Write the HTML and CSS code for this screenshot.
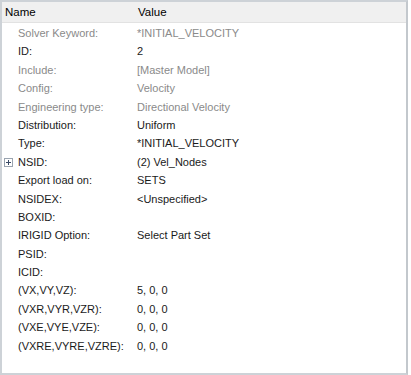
FILE: index.html
```html
<!DOCTYPE html>
<html lang="en">
<head>
    <meta charset="UTF-8">
    <title>Entity Editor</title>
    <link rel="stylesheet" href="styles.css">
</head>
<body>
    <div class="panel">
        <div class="header">
            <div class="col-name">Name</div>
            <div class="col-value">Value</div>
        </div>

        <div class="rows">
            <div class="row muted"><div class="label">Solver Keyword:</div><div class="value">*INITIAL_VELOCITY</div></div>
            <div class="row"><div class="label">ID:</div><div class="value">2</div></div>
            <div class="row muted"><div class="label">Include:</div><div class="value">[Master Model]</div></div>
            <div class="row muted"><div class="label">Config:</div><div class="value">Velocity</div></div>
            <div class="row muted"><div class="label">Engineering type:</div><div class="value">Directional Velocity</div></div>
            <div class="row"><div class="label">Distribution:</div><div class="value">Uniform</div></div>
            <div class="row"><div class="label">Type:</div><div class="value">*INITIAL_VELOCITY</div></div>
            <div class="row">
                <span class="expander"></span>
                <div class="label">NSID:</div><div class="value">(2) Vel_Nodes</div>
            </div>
            <div class="row"><div class="label">Export load on:</div><div class="value">SETS</div></div>
            <div class="row"><div class="label">NSIDEX:</div><div class="value">&lt;Unspecified&gt;</div></div>
            <div class="row"><div class="label">BOXID:</div><div class="value"></div></div>
            <div class="row"><div class="label">IRIGID Option:</div><div class="value">Select Part Set</div></div>
            <div class="row"><div class="label">PSID:</div><div class="value"></div></div>
            <div class="row"><div class="label">ICID:</div><div class="value"></div></div>
            <div class="row"><div class="label">(VX,VY,VZ):</div><div class="value">5, 0, 0</div></div>
            <div class="row"><div class="label">(VXR,VYR,VZR):</div><div class="value">0, 0, 0</div></div>
            <div class="row"><div class="label">(VXE,VYE,VZE):</div><div class="value">0, 0, 0</div></div>
            <div class="row"><div class="label">(VXRE,VYRE,VZRE):</div><div class="value">0, 0, 0</div></div>
        </div>
    </div>
</body>
</html>
```

FILE: styles.css
```css
body {
    margin: 0;
    background: #ffffff;
    font-family: "Liberation Sans", Arial, sans-serif;
    font-size: 11px;
    color: #1a1a1a;
}
.panel {
    box-sizing: border-box;
    width: 408px;
    height: 375px;
    border-top: 2px solid #cdd2d7;
    border-left: 2px solid #cdd2d7;
    border-right: 2px solid #c3c8cd;
    border-bottom: 2px solid #cdd2d7;
}
.header {
    display: flex;
    height: 20px;
    line-height: 20px;
    background: #f0f0f0;
    border-bottom: 1px solid #e2e2e2;
    font-size: 11.5px;
    color: #000;
}
.col-name {
    width: 133px;
    padding-left: 3px;
}
.rows {
    padding-top: 1px;
}
.row {
    position: relative;
    display: flex;
    height: 18.4px;
    line-height: 18.4px;
}
.label {
    width: 119px;
    padding-left: 16px;
}
.muted {
    color: #8a8a8a;
}
.expander {
    position: absolute;
    left: 2px;
    top: 5px;
    width: 7px;
    height: 7px;
    border: 1px solid #9aa4b0;
    background: #fff;
}
.expander::before,
.expander::after {
    content: "";
    position: absolute;
    background: #3a4a66;
}
.expander::before {
    left: 1px;
    top: 3px;
    width: 5px;
    height: 1px;
}
.expander::after {
    left: 3px;
    top: 1px;
    width: 1px;
    height: 5px;
}
```
